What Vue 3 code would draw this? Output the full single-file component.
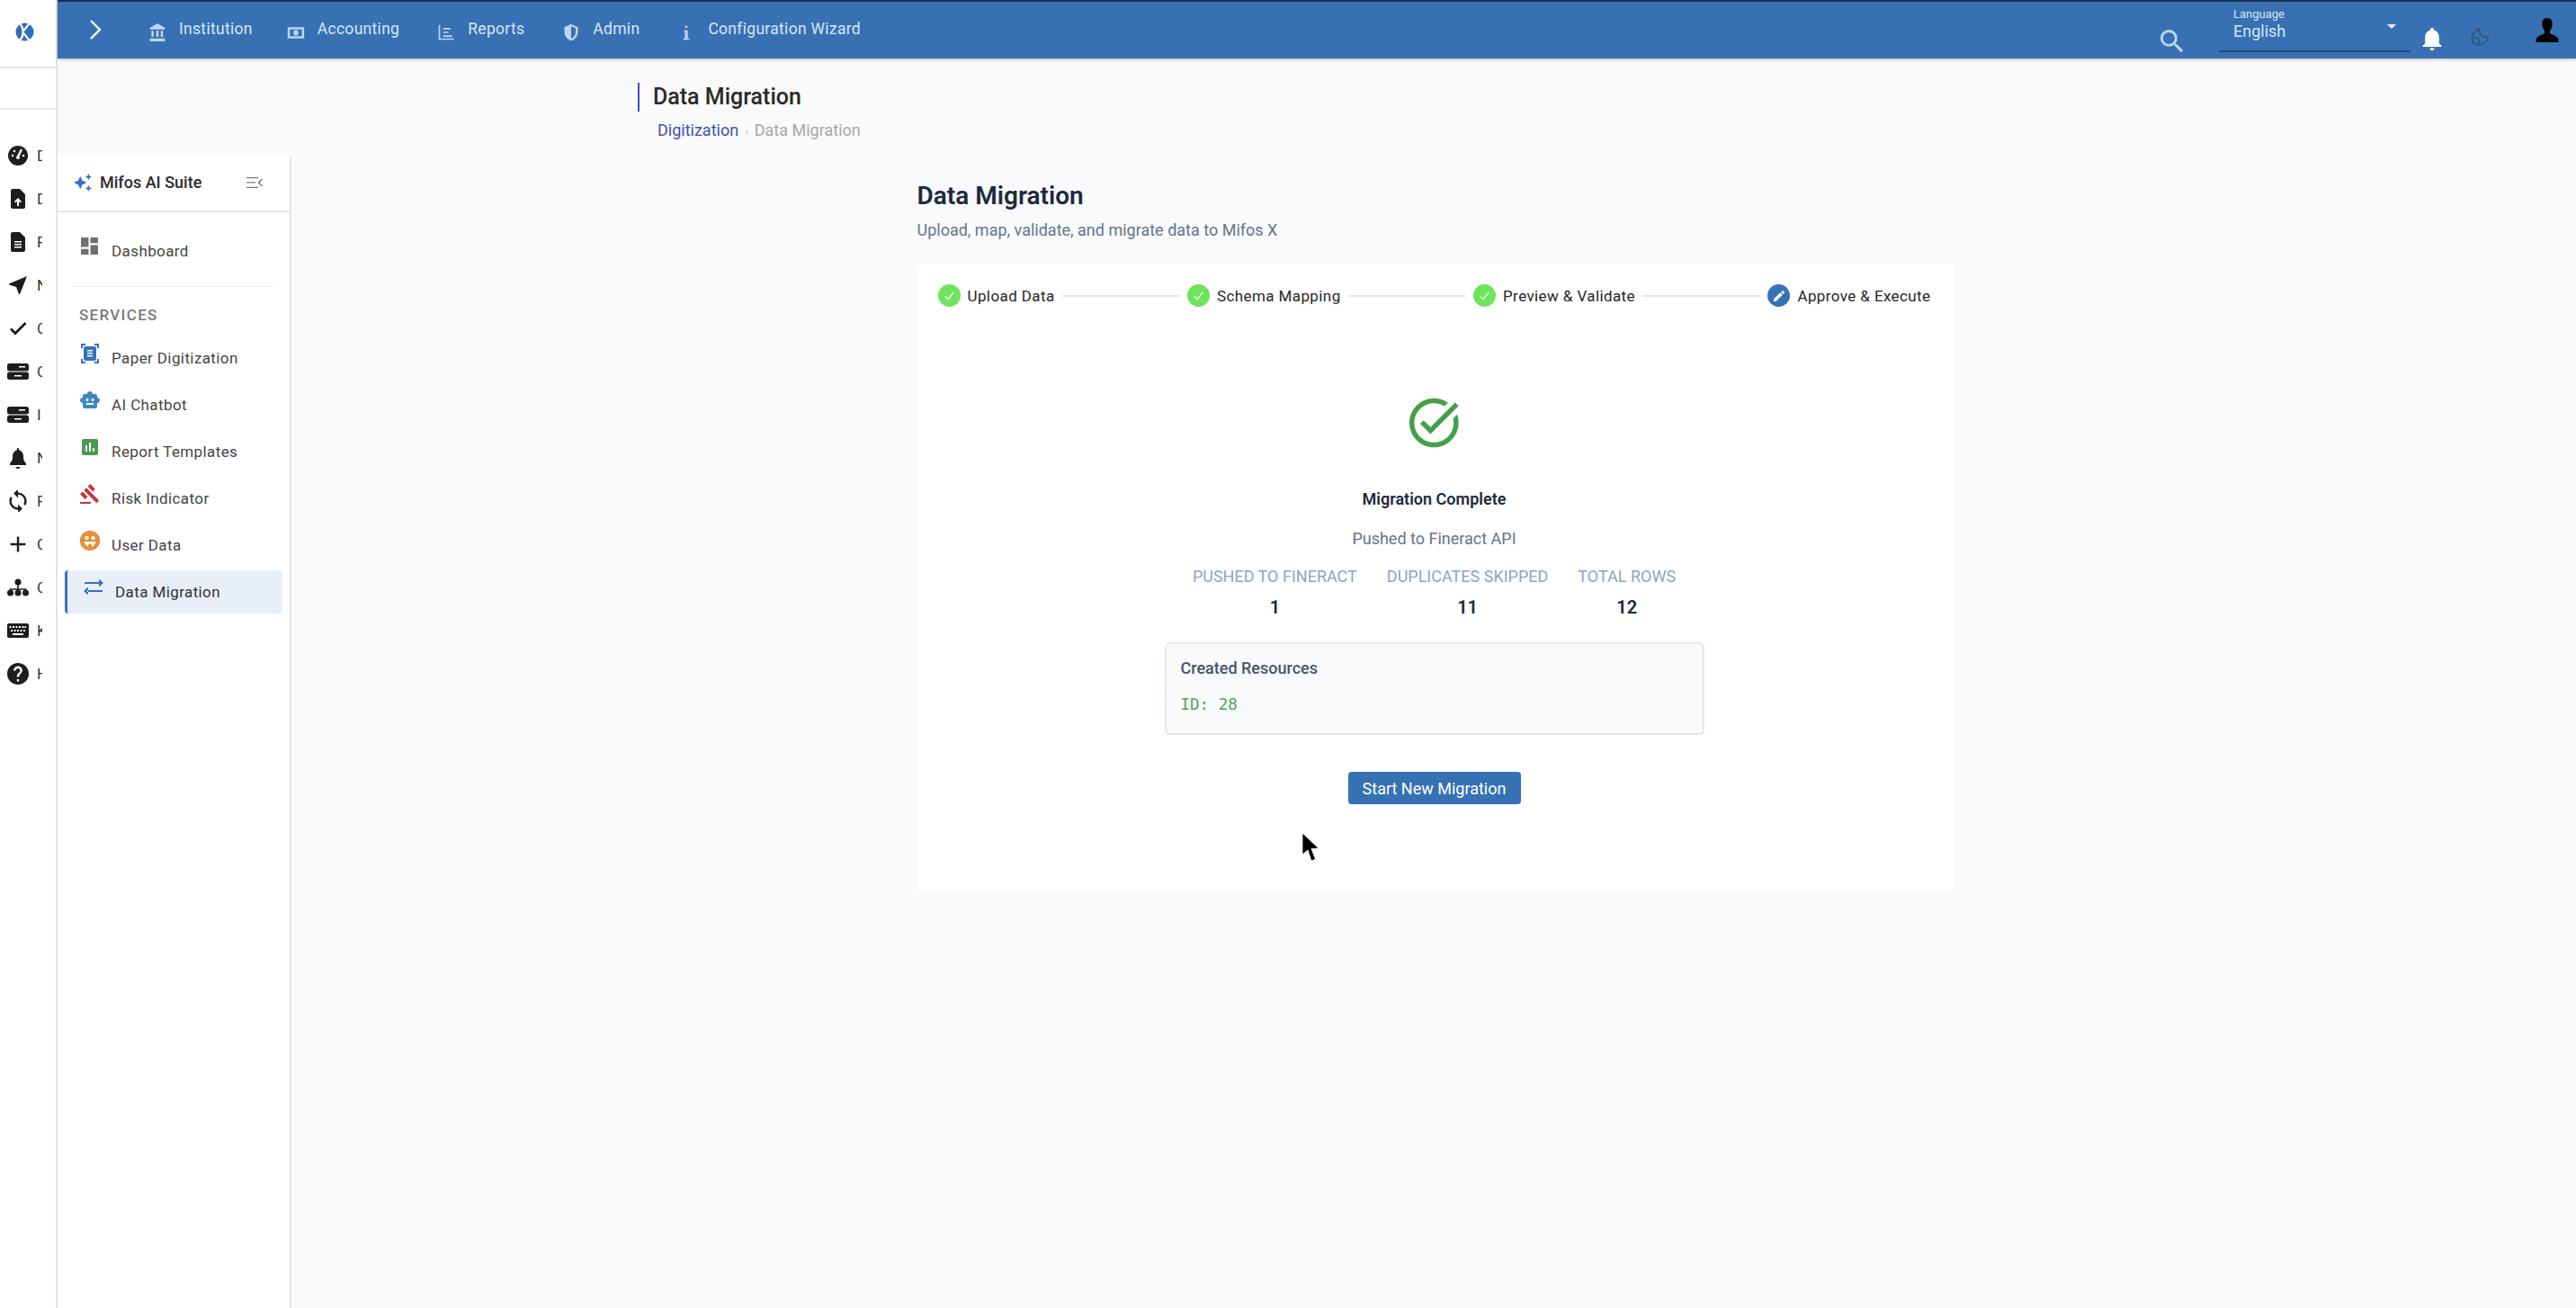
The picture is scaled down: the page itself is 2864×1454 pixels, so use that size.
<template>
  <div class="app">
    <aside class="rail">
      <div class="rail-logo">
        <svg viewBox="0 0 24 24" width="21" height="21">
          <circle cx="12" cy="12" r="11.5" fill="#2f6fb5" />
          <path d="M6 1 Q14 12 6 23 M18 1 L11 10 M11 14 L18 23" fill="none" stroke="#fff" stroke-width="2.6" />
        </svg>
      </div>
      <div class="rail-blank"></div>
      <nav class="rail-nav">
        <div v-for="item in railItems" :key="item.key" class="rail-item">
          <svg viewBox="0 0 24 24" width="24" height="24" class="rail-icon" v-html="item.svg"></svg>
          <span class="rail-letter">{{ item.letter }}</span>
        </div>
      </nav>
    </aside>

    <div class="body">
      <header class="topbar">
        <svg class="chevron" viewBox="0 0 14 22" width="14" height="22">
          <path d="M2 1 L12 11 L2 21" fill="none" stroke="#fff" stroke-width="2.4" />
        </svg>
        <div class="menu">
          <a v-for="m in menuItems" :key="m.label" class="menu-item" :class="m.cls">
            <svg viewBox="0 0 24 24" width="20" height="20" class="menu-icon" v-html="m.svg"></svg>
            <span>{{ m.label }}</span>
          </a>
        </div>
        <div class="top-right">
          <svg class="search" viewBox="3 3 18 18" width="26" height="26">
            <path fill="#bcd6f1" d="M15.5 14h-.79l-.28-.27A6.471 6.471 0 0 0 16 9.5 6.5 6.5 0 1 0 9.5 16c1.61 0 3.09-.59 4.23-1.57l.27.28v.79l5 4.99L20.49 19l-4.99-5zm-6 0C7.01 14 5 11.99 5 9.5S7.01 5 9.5 5 14 7.01 14 9.5 11.99 14 9.5 14z" />
          </svg>
          <div class="lang">
            <div class="lang-label">Language</div>
            <div class="lang-value">English</div>
            <span class="lang-arrow"></span>
          </div>
          <svg class="bell" viewBox="4 2 16 20" width="22" height="26">
            <path fill="#fff" d="M12 22c1.1 0 2-.9 2-2h-4c0 1.1.89 2 2 2zm6-6v-5c0-3.07-1.64-5.64-4.5-6.32V4c0-.83-.67-1.5-1.5-1.5s-1.5.67-1.5 1.5v.68C7.63 5.36 6 7.92 6 11v5l-2 2v1h16v-1l-2-2z" />
          </svg>
          <svg class="moon" viewBox="0 0 24 24" width="22" height="22">
            <path d="M11 2 C5 5 1 10 3 17 C5 22 12 23 17 20 C20 18 22 15 22 12 C17 14 12 10 11 2 Z M4 14 C8 11 12 14 12 21" fill="none" stroke="#2f4a6e" stroke-width="1.6" />
          </svg>
          <svg class="person" viewBox="0 0 26 28" width="26" height="28">
            <path fill="#000" d="M13 0 C8.5 0 7 3.5 7.3 7 C7.5 10 8.5 12.5 10 14 L10 17 C7 19 1 20 0.5 24 L0.5 27 L25.5 27 L25.5 24 C25 20 19 19 16 17 L16 14 C17.5 12.5 18.5 10 18.7 7 C19 3.5 17.5 0 13 0 Z" />
          </svg>
        </div>
      </header>

      <div class="page-head">
        <h2 class="page-title">Data Migration</h2>
        <div class="crumbs">
          <span class="crumb-link">Digitization</span>
          <span class="crumb-sep">›</span>
          <span class="crumb-now">Data Migration</span>
        </div>
      </div>

      <div class="workspace">
        <aside class="panel">
          <div class="panel-head">
            <svg viewBox="0 0 24 24" width="22" height="22">
              <path fill="#3672bd" d="M19 9l1.25-2.75L23 5l-2.75-1.25L19 1l-1.25 2.75L15 5l2.75 1.25L19 9zm-7.5.5L9 4 6.5 9.5 1 12l5.5 2.5L9 20l2.5-5.5L17 12l-5.5-2.5zM19 15l-1.25 2.75L15 19l2.75 1.25L19 23l1.25-2.75L23 19l-2.75-1.25L19 15z" />
            </svg>
            <span class="panel-name">Mifos AI Suite</span>
            <svg class="panel-toggle" viewBox="2 4 20 16" width="20" height="16">
              <path fill="#777" d="M3 18h13v-1.3H3v1.3zm0-5.4h10v-1.3H3v1.3zM3 6v1.3h13V6H3zm18 9.5L17.6 12 21 8.5 20 7.5l-4.6 4.5 4.6 4.5 1-1z" />
            </svg>
          </div>
          <div class="panel-body">
            <a class="panel-link dash">
              <svg viewBox="3 3 18 18" width="19" height="19" class="panel-icon">
                <path fill="#6f6f6f" d="M3 13h8V3H3v10zm0 8h8v-6H3v6zm10 0h8V11h-8v10zm0-18v6h8V3h-8z" />
              </svg>
              <span>Dashboard</span>
            </a>
            <div class="panel-rule"></div>
            <div class="panel-section">SERVICES</div>
            <a v-for="s in services" :key="s.label" class="panel-link" :class="{ active: s.active }">
              <svg viewBox="0 0 24 24" width="24" height="24" class="panel-icon" v-html="s.svg"></svg>
              <span>{{ s.label }}</span>
            </a>
          </div>
        </aside>

        <main class="content">
          <h1 class="content-title">Data Migration</h1>
          <p class="content-sub">Upload, map, validate, and migrate data to Mifos X</p>

          <section class="card">
            <div class="stepper">
              <template v-for="(step, i) in steps" :key="step.label">
                <div class="step">
                  <span class="step-dot" :class="{ current: step.current }">
                    <svg v-if="step.current" viewBox="0 0 24 24" width="16" height="16">
                      <path fill="#fff" d="M3 17.25V21h3.75L17.81 9.94l-3.75-3.75L3 17.25zM20.71 7.04c.39-.39.39-1.02 0-1.41l-2.34-2.34a.996.996 0 0 0-1.41 0l-1.83 1.83 3.75 3.75 1.83-1.83z" />
                    </svg>
                    <svg v-else viewBox="0 0 24 24" width="17" height="17">
                      <path d="M5 13 L10 18 L19 7" fill="none" stroke="#fff" stroke-width="1.8" />
                    </svg>
                  </span>
                  <span class="step-label">{{ step.label }}</span>
                </div>
                <div v-if="i < steps.length - 1" class="step-line"></div>
              </template>
            </div>

            <div class="result">
              <svg class="result-icon" viewBox="2 2 20.5 20" width="56" height="56">
                <path fill="#43a04a" d="M22 5.18L10.59 16.6l-4.24-4.24 1.41-1.41 2.83 2.83 10-10L22 5.18zm-2.21 5.04c.13.57.21 1.17.21 1.78 0 4.42-3.58 8-8 8s-8-3.58-8-8 3.58-8 8-8c1.58 0 3.04.46 4.28 1.25l1.44-1.44A9.9 9.9 0 0 0 12 2C6.48 2 2 6.48 2 12s4.48 10 10 10 10-4.48 10-10c0-1.19-.22-2.33-.6-3.39l-1.61 1.61z" />
              </svg>
              <div class="result-title">Migration Complete</div>
              <div class="result-sub">Pushed to Fineract API</div>
              <div class="stats">
                <div v-for="s in stats" :key="s.label" class="stat">
                  <div class="stat-label">{{ s.label }}</div>
                  <div class="stat-value">{{ s.value }}</div>
                </div>
              </div>
              <div class="resources">
                <div class="resources-title">Created Resources</div>
                <div class="resources-id">ID: 28</div>
              </div>
              <button class="start-btn">Start New Migration</button>
            </div>
          </section>
        </main>
      </div>
    </div>

    <!-- Mauszeiger aus der Aufnahme -->
    <svg class="cursor" viewBox="0 0 20 34" width="20" height="34">
      <path d="M1 1 L1 25 L7 20 L11 32 L15.5 30 L11 18.5 L19 18 Z" fill="#000" stroke="#fff" stroke-width="0.8" />
    </svg>
  </div>
</template>

<script setup>
const dark = '#1d1d1d'

const railItems = [
  { letter: 'D', svg: `<circle cx="12" cy="12" r="11" fill="${dark}"/><path d="M12 13 L16 5" stroke="#fff" stroke-width="2.4"/><circle cx="12" cy="14" r="2" fill="#fff"/><circle cx="6" cy="12" r="1.3" fill="#fff"/><circle cx="8" cy="7" r="1.3" fill="#fff"/><circle cx="18" cy="12" r="1.3" fill="#fff"/>` },
  { letter: 'D', svg: `<path fill="${dark}" d="M14 1H6c-1.1 0-2 .9-2 2v18c0 1.1.9 2 2 2h12c1.1 0 2-.9 2-2V7l-6-6z"/><path fill="#fff" d="M12 11l-4 4 1.4 1.4 1.6-1.6V20h2v-5.2l1.6 1.6L16 15z"/>` },
  { letter: 'F', svg: `<path fill="${dark}" d="M14 1H6c-1.1 0-2 .9-2 2v18c0 1.1.9 2 2 2h12c1.1 0 2-.9 2-2V7l-6-6z"/><path fill="#fff" d="M8 11h8v1.5H8zM8 14h8v1.5H8zM8 17h8v1.5H8z"/>` },
  { letter: 'N', svg: `<path fill="${dark}" d="M22 2L2 10.5v1l8 2.5 3 8h1L22 2z"/>` },
  { letter: 'C', svg: `<path fill="${dark}" d="M9 16.17L4.83 12l-1.41 1.41L9 19 21 7l-1.41-1.41z" stroke="${dark}" stroke-width="1"/>` },
  { letter: 'C', svg: `<rect x="0" y="3" width="24" height="8.5" rx="2.5" fill="${dark}"/><rect x="0" y="12.5" width="24" height="8.5" rx="2.5" fill="${dark}"/><path fill="#fff" d="M13 6h7v1.5h-7zM8 16h8v1.5H8z"/>` },
  { letter: 'I', svg: `<rect x="0" y="3" width="24" height="8.5" rx="2.5" fill="${dark}"/><rect x="0" y="12.5" width="24" height="8.5" rx="2.5" fill="${dark}"/><path fill="#fff" d="M13 6h7v1.5h-7zM8 16h8v1.5H8z"/>` },
  { letter: 'N', svg: `<path fill="${dark}" d="M12 24c1.4 0 2.5-1 2.5-2h-5c0 1 1.1 2 2.5 2zm9-6c-1.5-1.5-3-3-3-8 0-3.5-2.5-6-5-6.7V2c0-.6-.4-1-1-1s-1 .4-1 1v1.3C8.5 4 6 6.5 6 10c0 5-1.5 6.5-3 8v2h18v-2z"/>` },
  { letter: 'F', svg: `<path fill="${dark}" d="M12 4V1L8 5l4 4V6c3.31 0 6 2.69 6 6 0 1.01-.25 1.97-.7 2.8l1.46 1.46C19.54 15.03 20 13.57 20 12c0-4.42-3.58-8-8-8zm0 14c-3.31 0-6-2.69-6-6 0-1.01.25-1.97.7-2.8L5.24 7.74C4.46 8.97 4 10.43 4 12c0 4.42 3.58 8 8 8v3l4-4-4-4v3z" transform="translate(-2.4 -2.4) scale(1.2)"/>` },
  { letter: 'C', svg: `<path fill="${dark}" d="M19 13h-6v6h-2v-6H5v-2h6V5h2v6h6v2z" transform="translate(-2.4 -2.4) scale(1.2)"/>` },
  { letter: 'C', svg: `<circle cx="12" cy="6" r="3.5" fill="${dark}"/><circle cx="3.5" cy="18" r="3.5" fill="${dark}"/><circle cx="12" cy="18" r="3.5" fill="${dark}"/><circle cx="20.5" cy="18" r="3.5" fill="${dark}"/><path d="M12 6v12M3.5 18v-4h17v4" fill="none" stroke="${dark}" stroke-width="1.6"/>` },
  { letter: 'K', svg: `<path fill="${dark}" fill-rule="evenodd" d="M2 4h20c1.1 0 2 .9 2 2v12c0 1.1-.9 2-2 2H2c-1.1 0-2-.9-2-2V6c0-1.1.9-2 2-2zm.5 3v2h2V7h-2zm3.5 0v2h2V7H6zm3.5 0v2h2V7h-2zm3.5 0v2h2V7h-2zm3.5 0v2h2V7h-2zm3 0v2h1.5V7h-1.5zM4 11v2h2v-2H4zm3.5 0v2h2v-2h-2zm3.5 0v2h2v-2h-2zm3.5 0v2h2v-2h-2zm3.5 0v2h2v-2h-2zM6 15v2h12v-2H6z"/>` },
  { letter: 'H', svg: `<path fill="${dark}" d="M12 2C6.48 2 2 6.48 2 12s4.48 10 10 10 10-4.48 10-10S17.52 2 12 2zm1 17h-2v-2h2v2zm2.07-7.75l-.9.92C13.45 12.9 13 13.5 13 15h-2v-.5c0-1.1.45-2.1 1.17-2.83l1.24-1.26c.37-.36.59-.86.59-1.41 0-1.1-.9-2-2-2s-2 .9-2 2H8c0-2.21 1.79-4 4-4s4 1.79 4 4c0 .88-.36 1.68-.93 2.25z" transform="translate(-2.4 -2.4) scale(1.2)"/>` },
].map((item, i) => ({ ...item, key: i }))

const iconBlue = '#bcd6f1'

const menuItems = [
  { label: 'Institution', cls: 'm-inst', svg: `<path fill="${iconBlue}" d="M4 10v8h3v-8H4zm6.5 0v8h3v-8h-3zM2 24h20v-4H2v4zm14.5-14v8h3v-8h-3zM12 0L2 6v2h20V6L12 0z"/>` },
  { label: 'Accounting', cls: 'm-acc', svg: `<path fill="${iconBlue}" fill-rule="evenodd" d="M1 5h22v15H1V5zm3 3v9h16V8H4zm8 1a3.5 3.5 0 1 1 0 7 3.5 3.5 0 0 1 0-7z"/>` },
  { label: 'Reports', cls: 'm-rep', svg: `<path fill="${iconBlue}" d="M2 2h2v18h18v2H2V2zm6 4h10v2H8V6zm0 5h7v2H8v-2zm0 5h12v2H8v-2z"/>` },
  { label: 'Admin', cls: 'm-adm', svg: `<path fill="${iconBlue}" fill-rule="evenodd" d="M12 1L3 5v6c0 5.55 3.84 10.74 9 12 5.16-1.26 9-6.45 9-12V5l-9-4zm0 3v16c3.5-1.2 6-5 6-9V6.5L12 4z"/>` },
  { label: 'Configuration Wizard', cls: 'm-cfg', svg: `<path fill="${iconBlue}" d="M10.5 3h3v3h-3zM9 9h5v11h2v2H8v-2h2v-9H9z"/>` },
]

const services = [
  { label: 'Paper Digitization', svg: `<path fill="#3672bd" d="M7 3H4v3H2V1h5v2zm15 3V1h-5v2h3v3h2zM7 21H4v-3H2v5h5v-2zm13-3v3h-3v2h5v-5h-2z"/><rect x="5" y="4" width="14" height="16" rx="2" fill="#3672bd"/><path fill="#fff" d="M9 8h6v1.5H9zM9 11h6v1.5H9zM9 14h6v1.5H9z"/>` },
  { label: 'AI Chatbot', svg: `<path fill="#3f86c9" d="M20 9V7c0-1.1-.9-2-2-2h-3c0-1.66-1.34-3-3-3S9 3.34 9 5H6c-1.1 0-2 .9-2 2v2c-1.66 0-3 1.34-3 3s1.34 3 3 3v4c0 1.1.9 2 2 2h12c1.1 0 2-.9 2-2v-4c1.66 0 3-1.34 3-3s-1.34-3-3-3zM7.5 11.5c0-.83.67-1.5 1.5-1.5s1.5.67 1.5 1.5S9.83 13 9 13s-1.5-.67-1.5-1.5zM16 17H8v-2h8v2zm-1-4c-.83 0-1.5-.67-1.5-1.5S14.17 10 15 10s1.5.67 1.5 1.5S15.83 13 15 13z"/>` },
  { label: 'Report Templates', svg: `<path fill="#4c9a52" d="M19 3H5c-1.1 0-2 .9-2 2v14c0 1.1.9 2 2 2h14c1.1 0 2-.9 2-2V5c0-1.1-.9-2-2-2zM9 17H7v-7h2v7zm4 0h-2V7h2v10zm4 0h-2v-4h2v4z"/>` },
  { label: 'Risk Indicator', svg: `<path fill="#c0393b" d="M1 21h12v2H1zM5.245 8.07l2.83-2.827 14.14 14.142-2.828 2.828zM12.317 1l5.657 5.656-2.83 2.83-5.654-5.66zM3.825 9.485l5.657 5.657-2.828 2.828-5.657-5.657z"/>` },
  { label: 'User Data', svg: `<circle cx="12" cy="12" r="10" fill="none" stroke="#e98a2c" stroke-width="2.2"/><circle cx="12" cy="12" r="9" fill="#e98a2c"/><circle cx="8.5" cy="9" r="2.3" fill="#fff"/><circle cx="15.5" cy="9" r="2.3" fill="#fff"/><path d="M5.5 13h13c0 2-2 5-4.5 5.5l-.5-3-3 0-.5 3C8 18 5.5 15 5.5 13z" fill="#fff"/>` },
  { label: 'Data Migration', active: true, svg: `<path fill="#3672bd" d="M2 6h17v2H2zM18 2.5L23 7l-5 4.5zM5 15h17v2H5zM6 11.5L1 16l5 4.5z"/>` },
]

const steps = [
  { label: 'Upload Data' },
  { label: 'Schema Mapping' },
  { label: 'Preview & Validate' },
  { label: 'Approve & Execute', current: true },
]

const stats = [
  { label: 'Pushed to Fineract', value: '1' },
  { label: 'Duplicates Skipped', value: '11' },
  { label: 'Total Rows', value: '12' },
]
</script>

<style>
html, body {
  margin: 0;
  background: #fafafa;
  overflow: hidden;
}
</style>

<style scoped>
.app {
  position: relative;
  display: flex;
  width: 2864px;
  height: 1454px;
  overflow: hidden;
  font-family: Roboto, "Liberation Sans", sans-serif;
  color: #222;
}

/* Schmale Leiste links */
.rail {
  flex: 0 0 62px;
  background: #fff;
  border-right: 2px solid #e4e4e4;
}
.rail-logo {
  height: 76px;
  display: flex;
  align-items: center;
  box-sizing: border-box;
  padding: 0 0 4px 17px;
  border-bottom: 2px solid #e8e8e8;
}
.rail-blank {
  height: 44px;
  border-bottom: 2px solid #e8e8e8;
}
.rail-nav {
  padding-top: 27px;
}
.rail-item {
  height: 48px;
  display: flex;
  align-items: center;
  padding-left: 8px;
  overflow: hidden;
}
.rail-icon {
  flex: none;
}
.rail-letter {
  width: 6px;
  margin-left: 9px;
  overflow: hidden;
  font-size: 17px;
  color: #333;
}

.body {
  flex: 1;
  min-width: 0;
  display: flex;
  flex-direction: column;
}

/* Kopfleiste */
.topbar {
  flex: 0 0 65px;
  box-sizing: border-box;
  display: flex;
  align-items: center;
  background: #3771b3;
  border-top: 2px solid #1c2f4e;
  box-shadow: 0 1px 3px rgba(0, 0, 0, 0.3);
  color: #d6e5f5;
  position: relative;
  z-index: 2;
}
.chevron {
  margin-left: 35px;
  margin-bottom: 2px;
}
.menu {
  display: flex;
  align-items: center;
  height: 100%;
  padding-left: 52px;
}
.menu-item {
  display: flex;
  align-items: center;
  font-size: 17.5px;
  letter-spacing: 0.3px;
}
.menu-item span {
  position: relative;
  top: -2px;
}
.menu-icon {
  margin-right: 14px;
  position: relative;
  top: 2px;
}
.m-inst { margin-right: 38px; }
.m-acc { margin-right: 42px; }
.m-rep { margin-right: 42px; }
.m-adm { margin-right: 42px; }

.top-right {
  margin-left: auto;
  display: flex;
  align-items: center;
  height: 100%;
  position: relative;
}
.search {
  margin-right: 39px;
  margin-top: 24px;
}
.lang {
  position: relative;
  width: 213px;
  height: 56px;
  box-sizing: border-box;
  padding: 6px 0 0 16px;
  border-bottom: 2px solid #1f4a80;
  align-self: flex-start;
}
.lang-label {
  font-size: 13px;
  line-height: 15px;
}
.lang-value {
  font-size: 18px;
  line-height: 24px;
}
.lang-arrow {
  position: absolute;
  right: 16px;
  top: 25px;
  border-left: 5px solid transparent;
  border-right: 5px solid transparent;
  border-top: 5px solid #e8f0f8;
}
.bell {
  margin-left: 13px;
  margin-top: 18px;
}
.moon {
  margin-left: 31px;
  margin-top: 14px;
  opacity: 0.8;
}
.person {
  margin-left: 51px;
  margin-right: 19px;
  margin-top: 0;
}

/* Seitentitel */
.page-head {
  flex: 0 0 108px;
  box-sizing: border-box;
  padding: 27px 0 0 645px;
  background: #fafafa;
}
.page-title {
  margin: 0;
  padding-left: 15px;
  border-left: 2px solid #3f51c8;
  height: 32px;
  font-size: 25px;
  line-height: 32px;
  font-weight: 500;
  color: #2a2a2a;
}
.crumbs {
  margin: 10px 0 0 22px;
  font-size: 18px;
  line-height: 22px;
}
.crumb-link { color: #3f51b5; }
.crumb-sep { margin: 0 7px; color: #bbb; font-size: 12px; }
.crumb-now { color: #a6a6a6; }

.workspace {
  flex: 1;
  min-height: 0;
  display: flex;
  background: #f8fafc;
}

/* Seitenpanel */
.panel {
  flex: 0 0 260px;
  box-sizing: border-box;
  margin-right: 3px;
  background: #fff;
  border-right: 2px solid #e6e6e6;
}
.panel-head {
  height: 63px;
  box-sizing: border-box;
  display: flex;
  align-items: center;
  padding: 0 29px 2px 17px;
  border-bottom: 2px solid #e6e6e6;
}
.panel-name {
  margin-left: 8px;
  font-size: 18px;
  font-weight: 500;
  color: #2b2b2b;
}
.panel-toggle {
  margin-left: auto;
}
.panel-body {
  padding: 0 8px;
}
.panel-link {
  display: flex;
  align-items: center;
  height: 48px;
  margin-bottom: 4px;
  padding-left: 16px;
  font-size: 17px;
  letter-spacing: 0.4px;
  color: #444;
  box-sizing: border-box;
}
.panel-link.dash {
  margin-top: 19px;
}
.panel-link.dash .panel-icon {
  margin: -12px 15px 0 2px;
  top: 0;
}
.panel-icon {
  margin-right: 12px;
  position: relative;
  top: -5px;
}
.panel-link.active {
  background: #e9eff9;
  border-left: 3px solid #3672bd;
  border-radius: 4px;
  padding-left: 17px;
  color: #333;
}
.panel-rule {
  height: 1px;
  margin: 15px 9px 0 8px;
  background: #eeeeee;
}
.panel-section {
  margin: 23px 0 16px 16px;
  font-size: 17px;
  font-weight: 500;
  line-height: 16px;
  letter-spacing: 1.3px;
  color: #7a7a7a;
}

/* Inhalt */
.content {
  flex: 1;
  min-width: 0;
  max-width: 1152px;
  margin: 0 auto;
  padding-top: 30px;
}
.content-title {
  margin: 0;
  font-size: 28px;
  line-height: 30px;
  font-weight: 600;
  color: #1e293b;
}
.content-sub {
  margin: 11px 0 0;
  font-size: 18px;
  line-height: 24px;
  color: #64748b;
}
.card {
  margin-top: 26px;
  height: 697px;
  background: #fff;
  padding: 0 25px 0 23px;
  box-sizing: border-box;
}
.stepper {
  display: flex;
  align-items: center;
  height: 69px;
}
.step {
  display: flex;
  align-items: center;
}
.step-dot {
  width: 25px;
  height: 25px;
  border-radius: 50%;
  background: #6ee35c;
  display: flex;
  align-items: center;
  justify-content: center;
}
.step-dot.current {
  background: #3672b5;
}
.step-label {
  margin-left: 8px;
  font-size: 17px;
  letter-spacing: 0.4px;
  color: #262626;
  white-space: nowrap;
}
.step-line {
  flex: 1;
  height: 2px;
  margin: 0 8px;
  background: #e6e6e6;
}

.result {
  display: flex;
  flex-direction: column;
  align-items: center;
}
.result-icon {
  margin-top: 79px;
}
.result-title {
  margin-top: 45px;
  font-size: 18px;
  line-height: 24px;
  font-weight: 600;
  color: #1e293b;
}
.result-sub {
  margin-top: 20px;
  font-size: 18px;
  line-height: 24px;
  color: #64748b;
}
.stats {
  display: flex;
  justify-content: center;
  gap: 33px;
  margin-top: 18px;
  text-align: center;
}
.stat-label {
  font-size: 18px;
  line-height: 24px;
  text-transform: uppercase;
  color: #94a3b8;
}
.stat-value {
  margin-top: 10px;
  font-size: 20px;
  line-height: 24px;
  font-weight: 600;
  color: #1e293b;
}
.resources {
  width: 600px;
  height: 103px;
  margin-top: 27px;
  box-sizing: border-box;
  padding: 15px 16px;
  background: #f8fafc;
  border: 2px solid #e2e8f0;
  border-radius: 6px;
}
.resources-title {
  font-size: 18px;
  line-height: 24px;
  font-weight: 500;
  color: #475569;
}
.resources-id {
  margin-top: 16px;
  font-family: "DejaVu Sans Mono", monospace;
  font-size: 17.5px;
  line-height: 24px;
  color: #4ca655;
}
.start-btn {
  width: 192px;
  height: 36px;
  margin-top: 41px;
  padding: 0;
  border: none;
  border-radius: 4px;
  background: #3671b3;
  color: #fff;
  font-family: inherit;
  font-size: 18px;
}

.cursor {
  position: absolute;
  left: 1447px;
  top: 925px;
}
</style>
